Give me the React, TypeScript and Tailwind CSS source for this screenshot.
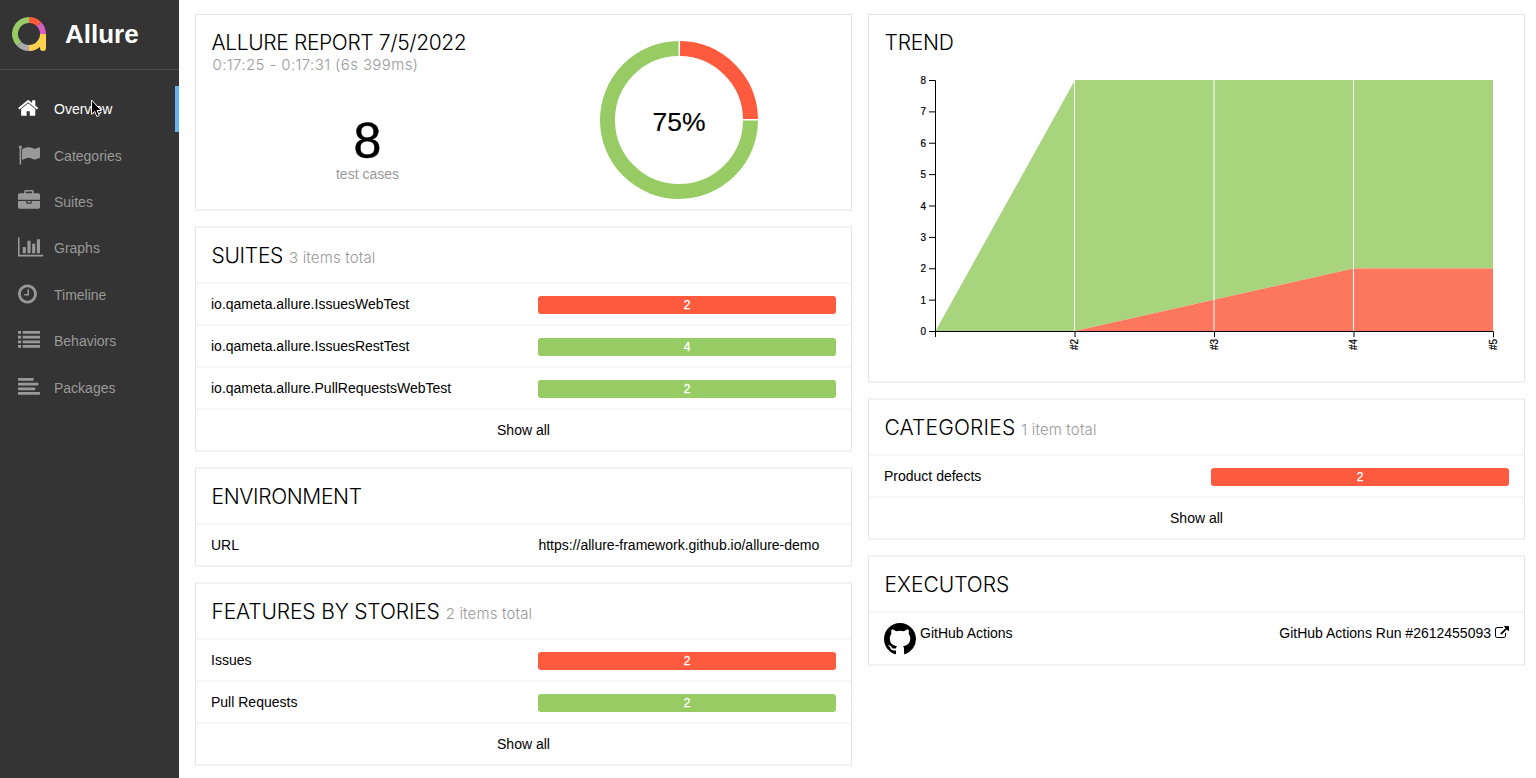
import React from "react";

const P = {
  home: "M1472 992v480q0 26-19 45t-45 19h-384v-384h-256v384h-384q-26 0-45-19t-19-45v-480q0-1 .5-3t.5-3l575-474 575 474q1 2 1 6zm223-69l-62 74q-8 9-21 11h-3q-13 0-21-7l-692-577-692 577q-12 8-24 7-13-2-21-11l-62-74q-8-10-7-23.5t11-21.5l719-599q32-26 76-26t76 26l244 204v-195q0-14 9-23t23-9h192q14 0 23 9t9 23v408l219 182q10 8 11 21.5t-7 23.5z",
  flag: "M320 256q0 72-64 110v1266q0 13-9.5 22.5t-22.5 9.5h-64q-13 0-22.5-9.5t-9.5-22.5v-1266q-64-38-64-110 0-53 37.5-90.5t90.5-37.5 90.5 37.5 37.5 90.5zm1472 64v763q0 25-12.5 38.5t-39.5 27.5q-215 116-369 116-61 0-123.5-22t-108.5-48-115.5-48-142.5-22q-192 0-464 146-17 9-33 9-26 0-45-19t-19-45v-742q0-32 31-55 21-14 79-43 236-120 421-120 107 0 200 29t219 88q38 19 88 19 54 0 117.5-21t110-47 88-47 54.5-21q26 0 45 19t19 45z",
  briefcase: "M640 256h512v-128h-512v128zm1152 640v480q0 66-47 113t-113 47h-1472q-66 0-113-47t-47-113v-480h672v160q0 26 19 45t45 19h320q26 0 45-19t19-45v-160h672zm-768 0v128h-256v-128h256zm768-480v384h-1792v-384q0-66 47-113t113-47h352v-160q0-40 28-68t68-28h576q40 0 68 28t28 68v160h352q66 0 113 47t47 113z",
  chart: "M640 896v512h-256v-512h256zm384-512v1024h-256v-1024h256zm1024 1152v128h-2048v-1536h128v1408h1920zm-640-896v768h-256v-768h256zm384-384v1152h-256v-1152h256z",
  clock: "M896 544v448q0 14-9 23t-23 9h-320q-14 0-23-9t-9-23v-64q0-14 9-23t23-9h224v-352q0-14 9-23t23-9h64q14 0 23 9t9 23zm416 352q0-148-73-273t-198-198-273-73-273 73-198 198-73 273 73 273 198 198 273 73 273-73 198-198 73-273zm224 0q0 209-103 385.5t-279.5 279.5-385.5 103-385.5-103-279.5-279.5-103-385.5 103-385.5 279.5-279.5 385.5-103 385.5 103 279.5 279.5 103 385.5z",
  list: "M0 160h256v224H0zM384 160h1408v224H384zM0 544h256v224H0zM384 544h1408v224H384zM0 928h256v224H0zM384 928h1408v224H384zM0 1312h256v224H0zM384 1312h1408v224H384z",
  align: "M50 160h1180q50 0 50 50v124q0 50-50 50H50q-50 0-50-50V210q0-50 50-50zM50 544h1564q50 0 50 50v124q0 50-50 50H50q-50 0-50-50V594q0-50 50-50zM50 928h1308q50 0 50 50v124q0 50-50 50H50q-50 0-50-50V978q0-50 50-50zM50 1312h1692q50 0 50 50v124q0 50-50 50H50q-50 0-50-50v-124q0-50 50-50z",
  external: "M1408 928v320q0 119-84.5 203.5t-203.5 84.5h-832q-119 0-203.5-84.5t-84.5-203.5v-832q0-119 84.5-203.5t203.5-84.5h704q14 0 23 9t9 23v64q0 14-9 23t-23 9h-704q-66 0-113 47t-47 113v832q0 66 47 113t113 47h832q66 0 113-47t47-113v-320q0-14 9-23t23-9h64q14 0 23 9t9 23zm384-864v512q0 26-19 45t-45 19-45-19l-176-176-652 652q-10 10-23 10t-23-10l-114-114q-10-10-10-23t10-23l652-652-176-176q-19-19-19-45t19-45 45-19h512q26 0 45 19t19 45z",
  github: "M8 0C3.58 0 0 3.58 0 8c0 3.54 2.29 6.53 5.47 7.59.4.07.55-.17.55-.38 0-.19-.01-.82-.01-1.49-2.01.37-2.53-.49-2.69-.94-.09-.23-.48-.94-.82-1.13-.28-.15-.68-.52-.01-.53.63-.01 1.08.58 1.23.82.72 1.21 1.87.87 2.33.66.07-.52.28-.87.51-1.07-1.78-.2-3.64-.89-3.64-3.95 0-.87.31-1.59.82-2.15-.08-.2-.36-1.02.08-2.12 0 0 .67-.21 2.2.82.64-.18 1.32-.27 2-.27.68 0 1.36.09 2 .27 1.53-1.04 2.2-.82 2.2-.82.44 1.1.16 1.92.08 2.12.51.56.82 1.27.82 2.15 0 3.07-1.87 3.75-3.65 3.95.29.25.54.73.54 1.48 0 1.07-.01 1.93-.01 2.2 0 .21.15.46.55.38A8.013 8.013 0 0016 8c0-4.42-3.58-8-8-8z",
};

const NAV = [
  { label: "Overview", d: P.home },
  { label: "Categories", d: P.flag },
  { label: "Suites", d: P.briefcase },
  { label: "Graphs", d: P.chart },
  { label: "Timeline", d: P.clock },
  { label: "Behaviors", d: P.list },
  { label: "Packages", d: P.align },
];

function Logo() {
  return (
    <svg width="36" height="36" viewBox="0 0 36 36" fill="none" strokeWidth="6">
      <path d="M7.1 27.9A14 14 0 0 1 17 4" stroke="#97cc64" />
      <path d="M17 4A14 14 0 0 1 26.9 8.1" stroke="#fd5a3e" />
      <path d="M26.9 8.1A14 14 0 0 1 31 18" stroke="#d35ebe" />
      <path d="M7.1 27.9A14 14 0 0 0 17 32" stroke="#aaa" />
      <path d="M17 32A14 14 0 0 0 31 18" stroke="#ffd050" />
      <path d="M31 18V32" stroke="#ffd050" />
      <circle cx="31" cy="32" r="3" fill="#ffd050" stroke="none" />
    </svg>
  );
}

function Sidebar() {
  return (
    <aside className="relative h-[778px] w-[179px] shrink-0 bg-[#343434]">
      <div className="flex h-[70px] items-center border-b border-[#4d4d4d] pb-px pl-3">
        <Logo />
        <span className="ml-[17px] text-[26px] font-bold leading-none text-white">Allure</span>
      </div>
      <nav className="pt-4">
        {NAV.map((n, i) => (
          <div
            key={n.label}
            className={
              i === 0
                ? "flex h-[46.4px] items-center border-r-4 border-[#64b5f6] pl-[18px] text-white"
                : "flex h-[46.4px] items-center pl-[18px] text-[#999]"
            }
          >
            <svg className="-mt-0.5 shrink-0" width="26" height="22" viewBox="0 0 2118 1792" fill="currentColor">
              <path d={n.d} transform={i === 0 ? "translate(-64 0)" : undefined} />
            </svg>
            <span className="ml-2.5 text-sm leading-5">{n.label}</span>
          </div>
        ))}
      </nav>
      <svg className="absolute left-[90px] top-[99px]" width="12" height="20" viewBox="0 0 12 20">
        <path d="M1.5 1v14.3l3.2-3 2.2 5.2 2.4-1-2.2-5h4.2z" fill="#000" stroke="#fff" strokeWidth="1" />
      </svg>
    </aside>
  );
}

function Title({ title, sub, tracking = "" }: { title: string; sub?: string; tracking?: string }) {
  return (
    <div className="flex h-[54px] items-baseline pl-[15.5px] pt-3.5 font-['Inter',sans-serif] font-light">
      <h2 className={`whitespace-nowrap text-[21px] leading-7 text-black ${tracking}`}>{title}</h2>
      {sub && <span className="ml-1.5 whitespace-nowrap text-[15px] tracking-[0.15px] text-[#999]">{sub}</span>}
    </div>
  );
}

function Card({ children, className }: { children: React.ReactNode; className: string }) {
  return (
    <section className={`border-x border-y-2 border-x-[#e5e5e5] border-y-[#f2f2f2] bg-white ${className}`}>
      {children}
    </section>
  );
}

function Row({ name, value, color }: { name: string; value: string; color?: "red" | "green" }) {
  return (
    <div className="flex h-[42px] items-center border-t-2 border-[#f7f7f7] px-[15px] text-sm">
      <span className="w-[327.4px] shrink-0">{name}</span>
      {color ? (
        <span
          className={
            color === "red"
              ? "mt-0.5 h-[18px] flex-1 rounded-[3px] bg-[#fd5a3e] text-center text-xs leading-[18px] text-white [-webkit-text-stroke:0.3px_white]"
              : "mt-0.5 h-[18px] flex-1 rounded-[3px] bg-[#97cc64] text-center text-xs leading-[18px] text-white [-webkit-text-stroke:0.3px_white]"
          }
        >
          {value}
        </span>
      ) : (
        <span>{value}</span>
      )}
    </div>
  );
}

function ShowAll() {
  return (
    <div className="flex h-[42px] items-center justify-center border-t-2 border-[#f7f7f7] text-sm">Show all</div>
  );
}

function Donut() {
  return (
    <svg className="ml-[76px] mt-[25px]" width="160" height="160" viewBox="0 0 160 160">
      <path d="M80 8.5A71.5 71.5 0 0 1 150.5 79" stroke="#fd5a3e" strokeWidth="15" fill="none" />
      <path d="M150.5 80.5A71.5 71.5 0 1 1 78.5 8.5" stroke="#97cc64" strokeWidth="15" fill="none" />
      <text x="79" y="91" textAnchor="middle" fontSize="26.5" stroke="#000" strokeWidth=".15">75%</text>
    </svg>
  );
}

function TrendChart() {
  return (
    <svg width="655" height="310" viewBox="869 70 655 310" className="mt-px block">
      <path d="M935.5 331L1075 80H1493V268.5H1353.5L1075 331Z" fill="#a8d47e" />
      <path d="M1075 331L1353.5 268.5H1493V331Z" fill="#fd765e" />
      <path d="M1074.5 80V331M1214 80V331M1353.5 80V331" stroke="#fff" />
      <path d="M929 80.5H935.5V331.5H1493.5V337.5M935.5 331V337M929 331.5H935.5" stroke="#000" fill="none" />
      {[0, 1, 2, 3, 4, 5, 6, 7, 8].map((v) => (
        <g key={v}>
          <path d={`M929 ${331.5 - v * 31.375}H935`} stroke="#000" />
          <text x="926" y={335 - v * 31.375} fontSize="10" textAnchor="end" stroke="#000" strokeWidth=".2">{v}</text>
        </g>
      ))}
      {["#2", "#3", "#4", "#5"].map((t, i) => (
        <g key={t}>
          <path d={`M${1075 + i * 139.5} 332V337`} stroke="#000" />
          <text transform={`translate(${1078 + i * 139.5} 350) rotate(-90)`} fontSize="10" stroke="#000" strokeWidth=".2">{t}</text>
        </g>
      ))}
    </svg>
  );
}

export default function App() {
  return (
    <div className="flex h-[778px] w-[1536px] overflow-hidden bg-[#fefefe] font-['Liberation_Sans',Arial,sans-serif] text-black">
      <Sidebar />
      <main className="flex flex-1 gap-4 pl-4 pt-3.5">
        <div className="flex w-[657px] flex-col">
          <Card className="flex h-[197px] border-t! border-t-[#e5e5e5]!">
            <div className="w-[328px]">
              <div className="pl-[15.5px] pt-3.5 font-['Inter',sans-serif] font-light">
                <h2 className="whitespace-nowrap text-[21px] leading-7 tracking-[-0.37px]">ALLURE REPORT 7/5/2022</h2>
                <p className="-mt-0.5 whitespace-nowrap pl-px text-[15px] leading-5 tracking-[0.39px] text-[#999]">0:17:25 - 0:17:31 (6s 399ms)</p>
              </div>
              <div className="pl-[15px] pt-[41px] text-center">
                <div className="text-[50px] leading-[50px] [-webkit-text-stroke:0.5px_black]">8</div>
                <div className="text-sm leading-4 text-[#999]">test cases</div>
              </div>
            </div>
            <Donut />
          </Card>
          <Card className="mt-[15px] h-[226px]">
            <Title title="SUITES" sub="3 items total" tracking="tracking-[-0.3px]" />
            <Row name="io.qameta.allure.IssuesWebTest" value="2" color="red" />
            <Row name="io.qameta.allure.IssuesRestTest" value="4" color="green" />
            <Row name="io.qameta.allure.PullRequestsWebTest" value="2" color="green" />
            <ShowAll />
          </Card>
          <Card className="mt-[15px] h-[100px]">
            <Title title="ENVIRONMENT" tracking="tracking-[-0.35px]" />
            <Row name="URL" value="https://allure-framework.github.io/allure-demo" />
          </Card>
          <Card className="mt-[15px] h-[184px]">
            <Title title="FEATURES BY STORIES" sub="2 items total" tracking="tracking-[-0.15px]" />
            <Row name="Issues" value="2" color="red" />
            <Row name="Pull Requests" value="2" color="green" />
            <ShowAll />
          </Card>
        </div>
        <div className="flex w-[657px] flex-col">
          <Card className="h-[369px] border-t! border-t-[#e5e5e5]!">
            <Title title="TREND" tracking="tracking-[-0.2px]" />
            <TrendChart />
          </Card>
          <Card className="mt-[15px] h-[142px]">
            <Title title="CATEGORIES" sub="1 item total" tracking="tracking-[0.15px]" />
            <Row name="Product defects" value="2" color="red" />
            <ShowAll />
          </Card>
          <Card className="mt-[15px] h-[111px]">
            <Title title="EXECUTORS" />
            <div className="flex border-t-2 border-[#f7f7f7] px-[15px] pt-2.5 text-sm leading-5">
              <svg width="32" height="32" viewBox="0 0 16 16"><path d={P.github} /></svg>
              <span className="ml-1">GitHub Actions</span>
              <span className="ml-auto flex items-center self-start">
                GitHub Actions Run #2612455093
                <svg className="ml-1" width="14" height="14" viewBox="0 0 1792 1792"><path d={P.external} /></svg>
              </span>
            </div>
          </Card>
        </div>
      </main>
    </div>
  );
}
